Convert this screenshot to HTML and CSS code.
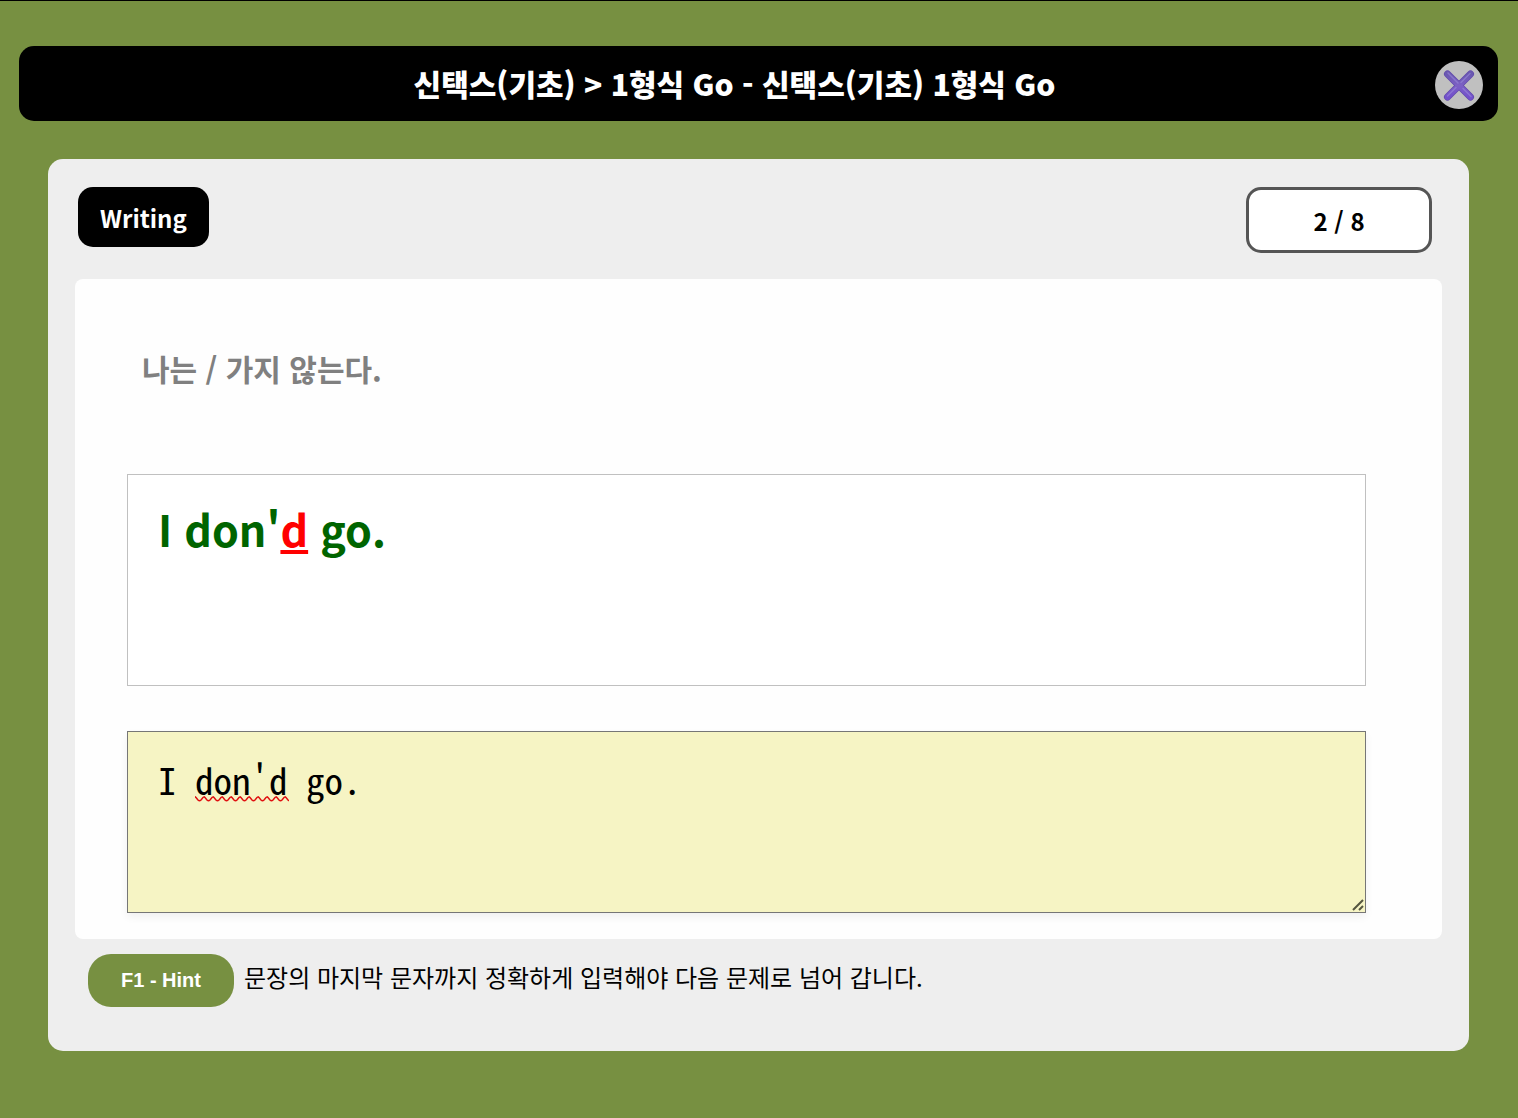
FILE: index.html
```html
<!DOCTYPE html>
<html lang="ko">
<head>
<meta charset="utf-8">
<meta name="viewport" content="width=device-width, initial-scale=1">
<title>신택스(기초)</title>
<link rel="stylesheet" href="styles.css">
</head>
<body>
<header class="topbar">
  <h1 class="title">신택스(기초) &gt; 1형식 Go - 신택스(기초) 1형식 Go</h1>
  <button class="close" type="button" aria-label="닫기">
    <svg viewBox="0 0 48 48" width="48" height="48" aria-hidden="true">
      <defs>
        <linearGradient id="arm-fill" x1="0" y1="0" x2="0" y2="1">
          <stop offset="0" stop-color="#6a58b0"/>
          <stop offset="0.5" stop-color="#7c60c4"/>
          <stop offset="1" stop-color="#7350cc"/>
        </linearGradient>
      </defs>
      <g fill="none" stroke-linecap="round">
        <path d="M12.500 13L35.500 36M35.500 13L12.500 36" stroke="#6048ac" stroke-width="7"/>
        <path d="M12.500 13L35.500 36M35.500 13L12.500 36" stroke="url(#arm-fill)" stroke-width="5.500"/>
        <path d="M13 12L23 22M35 12.500L26 21.500M12.500 35L21 26.500M28 27.500L36 35.500" stroke="#9a88d8" stroke-width="1.500" opacity="0.600"/>
      </g>
    </svg>
  </button>
</header>
<main class="card">
  <div class="card-head">
    <span class="mode">Writing</span>
    <span class="counter">2 / 8</span>
  </div>
  <section class="panel">
    <p class="prompt">나는 / 가지 않는다.</p>
    <div class="feedback">I don'<span class="wrong">d</span> go.</div>
    <div class="entry">
      <textarea class="input" aria-label="문장 입력" spellcheck="false">I don'd go.</textarea>
      <svg class="squiggle" width="94" height="6" aria-hidden="true">
        <defs>
          <pattern id="wave" width="9" height="6" patternUnits="userSpaceOnUse">
            <path d="M-1 1Q0 .5 1 1.500L3 4Q4.500 5.500 6 4L8 1.500Q9 .5 10 1.500" fill="none" stroke="#e01010" stroke-width="1.500"/>
          </pattern>
        </defs>
        <rect width="94" height="6" fill="url(#wave)"/>
      </svg>
      <svg class="grip" width="12" height="12" viewBox="0 0 12 12" aria-hidden="true">
        <path d="M1 11L11 1M7 11L11 7" fill="none" stroke="#55553f" stroke-width="2"/>
      </svg>
    </div>
  </section>
  <footer class="card-foot">
    <button class="hint" type="button">F1 - Hint</button>
    <p class="note">문장의 마지막 문자까지 정확하게 입력해야 다음 문제로 넘어 갑니다.</p>
  </footer>
</main>
</body>
</html>
```

FILE: styles.css
```css
* {
  box-sizing: border-box;
}

body {
  margin: 0;
  min-height: 100vh;
  padding: 45px 20px 67px 19px;
  border-top: 1px solid #000;
  background: #779041;
  color: #000;
  font-family: "Noto Sans CJK KR", sans-serif;
}

.topbar {
  display: flex;
  align-items: flex-start;
  padding: 15px 15px 12px;
  border-radius: 15px;
  background: #000;
}

.title {
  flex: 1;
  margin: 0;
  color: #fff;
  font-size: 30px;
  font-weight: 900;
  line-height: 44px;
  text-align: center;
}

.close {
  width: 48px;
  height: 48px;
  padding: 0;
  border: 0;
  border-radius: 50%;
  background: #c0c0c0;
}

.close svg {
  display: block;
}

.card {
  margin: 38px 29px 0;
  padding: 28px 27px 44px;
  border-radius: 15px;
  background: #eee;
}

.card-head {
  display: flex;
  align-items: flex-start;
  justify-content: space-between;
  padding: 0 10px 0 3px;
}

.mode {
  padding: 13px 22px 11px;
  border-radius: 15px;
  background: #000;
  color: #fff;
  font-size: 24px;
  font-weight: 700;
  line-height: 36px;
}

.counter {
  width: 186px;
  padding: 13px 0 11px;
  border: 3px solid #555;
  border-radius: 15px;
  background: #fff;
  font-size: 24px;
  font-weight: 700;
  line-height: 36px;
  text-align: center;
}

.panel {
  margin-top: 26px;
  padding: 67px 76px 26px 52px;
  border-radius: 8px;
  background: #fefefe;
}

.prompt {
  margin: 0 0 84px;
  padding-left: 15px;
  color: #808080;
  font-size: 30px;
  font-weight: 700;
  line-height: 44px;
}

.feedback {
  min-height: 212px;
  padding: 19px 30px;
  border: 1px solid #c0c0c0;
  background: #fff;
  color: #006400;
  font-size: 43px;
  font-weight: 700;
  line-height: 68px;
}

.wrong {
  color: #f00;
  text-decoration: underline;
}

.entry {
  position: relative;
  margin-top: 45px;
}

.input {
  display: block;
  width: 100%;
  height: 182px;
  padding: 25px 30px;
  border: 1px solid #767676;
  border-radius: 0;
  background: #f6f4c4;
  box-shadow: 0 4px 8px rgba(0, 0, 0, 0.06);
  color: #000;
  font-family: "Noto Sans CJK KR", monospace;
  font-feature-settings: "hwid";
  font-size: 37px;
  line-height: 44px;
  resize: none;
}

.squiggle {
  position: absolute;
  left: 68px;
  top: 65px;
}

.grip {
  position: absolute;
  right: 2px;
  bottom: 2px;
}

.card-foot {
  display: flex;
  align-items: center;
  gap: 10px;
  padding: 15px 13px 0;
}

.hint {
  width: 146px;
  height: 53px;
  padding: 0;
  border: 0;
  border-radius: 23px;
  background: #779041;
  color: #fff;
  font-family: "Liberation Sans", Arial, sans-serif;
  font-size: 20px;
  font-weight: 700;
}

.note {
  margin: 0;
  padding-bottom: 8px;
  font-size: 24px;
  line-height: 36px;
}
```
